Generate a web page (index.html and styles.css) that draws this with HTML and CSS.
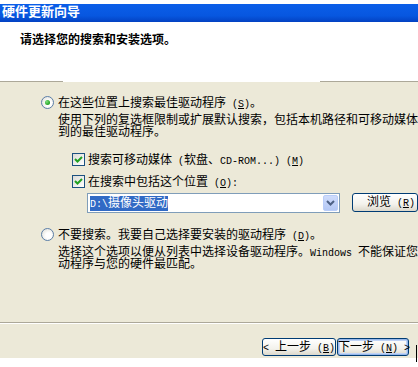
FILE: index.html
```html
<!DOCTYPE html>
<html lang="zh-CN">
<head>
    <meta charset="UTF-8">
    <meta name="viewport" content="width=device-width, initial-scale=1.0">
    <title>硬件更新向导</title>
    <link rel="stylesheet" href="styles.css">
</head>
<body>
    <div class="titlebar">硬件更新向导</div>

    <div class="header">请选择您的搜索和安装选项。</div>
    <div class="sep-top"></div>

    <div class="content">
        <div class="option">
            <span class="radio checked"></span>
            <span>在这些位置上搜索最佳驱动程序<span class="en"> (<u>S</u>)</span>。</span>
        </div>
        <div class="desc">
            <div>使用下列的复选框限制或扩展默认搜索，包括本机路径和可移动媒体</div>
            <div>到的最佳驱动程序。</div>
        </div>

        <div class="check first">
            <span class="box"><svg width="11" height="11" viewBox="0 0 11 11"><path d="M2 5 L4.5 7.5 L9 3" fill="none" stroke="#21a121" stroke-width="2"/></svg></span>
            <span>搜索可移动媒体<span class="en"> (</span>软盘、<span class="en">CD-ROM...) (<u>M</u>)</span></span>
        </div>
        <div class="check">
            <span class="box"><svg width="11" height="11" viewBox="0 0 11 11"><path d="M2 5 L4.5 7.5 L9 3" fill="none" stroke="#21a121" stroke-width="2"/></svg></span>
            <span>在搜索中包括这个位置<span class="en"> (<u>O</u>):</span></span>
        </div>

        <div class="path-row">
            <div class="combo">
                <span class="selected"><span class="en">D:\</span>摄像头驱动</span>
                <span class="drop"><svg width="9" height="6" viewBox="0 0 9 6"><path d="M1 1 L4.5 4.5 L8 1" fill="none" stroke="#4d6185" stroke-width="2"/></svg></span>
            </div>
            <button class="btn browse">浏览<span class="en"> (<u>R</u>)</span></button>
        </div>

        <div class="option second">
            <span class="radio"></span>
            <span>不要搜索。我要自己选择要安装的驱动程序<span class="en"> (<u>D</u>)</span>。</span>
        </div>
        <div class="desc">
            <div>选择这个选项以便从列表中选择设备驱动程序。<span class="en">Windows </span>不能保证您</div>
            <div>动程序与您的硬件最匹配。</div>
        </div>
    </div>

    <div class="sep-bottom"></div>

    <div class="footer">
        <button class="btn"><span class="en">&lt; </span>上一步<span class="en"> (<u>B</u>)</span></button>
        <button class="btn default">下一步<span class="en"> (<u>N</u>) &gt;</span></button>
    </div>

    <div class="cursor"></div>
</body>
</html>
```

FILE: styles.css
```css
html, body {
    margin: 0;
    overflow: hidden;
}
body {
    position: relative;
    width: 418px;
    height: 367px;
    background-color: #fff;
    font-family: "Noto Sans CJK SC", sans-serif;
    font-size: 12px;
    color: #000;
}
.en {
    font-family: "Liberation Mono", monospace;
    font-size: 10px;
}
.titlebar {
    margin-top: 4px;
    height: 18px;
    padding-left: 2px;
    background: linear-gradient(#0b5ee8, #0757e0 65%, #0341c2);
    color: #fff;
    font-weight: bold;
    font-size: 13px;
    line-height: 14px;
    overflow: hidden;
}
.header {
    box-sizing: border-box;
    height: 59px;
    padding: 11px 0 0 20px;
    font-weight: bold;
    line-height: 12px;
    background-color: #fff;
}
.sep-top {
    height: 1px;
    background: linear-gradient(to right, #aca899 0 63px, #fff 63px 320px, #aca899 320px);
}
.content {
    box-sizing: border-box;
    height: 240px;
    padding-top: 14px;
    background-color: #ece9d8;
    white-space: nowrap;
}
.option {
    display: flex;
    align-items: center;
    gap: 4px;
    height: 13px;
    padding-left: 41px;
    line-height: 13px;
}
.option.second {
    margin-top: 15px;
}
.radio {
    box-sizing: border-box;
    width: 13px;
    height: 13px;
    border: 1px solid #5a7ea8;
    border-radius: 50%;
    background: radial-gradient(circle at 60% 60%, #fff 30%, #dcdad0 100%);
    display: flex;
    align-items: center;
    justify-content: center;
}
.radio.checked::after {
    content: "";
    width: 5px;
    height: 5px;
    border-radius: 50%;
    background: radial-gradient(circle at 35% 35%, #7ee07e, #21a121 70%);
}
.desc {
    margin-top: 4px;
    padding-left: 58px;
    line-height: 12px;
}
.desc div {
    height: 12px;
    overflow: visible;
}
.check {
    display: flex;
    align-items: center;
    gap: 3px;
    height: 13px;
    margin-top: 9px;
    padding-left: 72px;
    line-height: 13px;
}
.check.first {
    margin-top: 16px;
}
.box {
    box-sizing: border-box;
    width: 13px;
    height: 13px;
    border: 1px solid #1c5180;
    background: linear-gradient(135deg, #dcdcd7, #fff);
    display: flex;
    align-items: center;
    justify-content: center;
}
.path-row {
    display: flex;
    align-items: flex-start;
    gap: 12px;
    margin-top: 5px;
    padding-left: 87px;
}
.combo {
    box-sizing: border-box;
    width: 272px;
    height: 20px;
    border: 1px solid #7f9db9;
    background-color: #fff;
    display: flex;
    align-items: center;
    justify-content: space-between;
    padding: 0 1px 0 2px;
}
.selected {
    background-color: #316ac5;
    color: #fff;
    line-height: 12px;
}
.drop {
    box-sizing: border-box;
    width: 15px;
    height: 16px;
    border: 1px solid #b9cdf9;
    border-radius: 2px;
    background: linear-gradient(#cfdcfc, #b4c8f5);
    display: flex;
    align-items: center;
    justify-content: center;
}
.btn {
    box-sizing: border-box;
    height: 18px;
    padding: 0;
    border: 1px solid #003c74;
    border-radius: 3px;
    background: linear-gradient(#fff, #f3f2ec 60%, #dcd8cb);
    font-family: "Noto Sans CJK SC", sans-serif;
    font-size: 12px;
    line-height: 14px;
    color: #000;
    white-space: nowrap;
}
.browse {
    width: 70px;
    height: 19px;
    text-align: left;
    padding-left: 14px;
}
.default {
    box-shadow: inset 0 0 0 1px #98b8ea, inset 0 0 0 2px #c0d3f5;
}
.sep-bottom {
    height: 1px;
    border-bottom: 1px solid #fff;
    background-color: #aca899;
}
.footer {
    box-sizing: border-box;
    height: 34px;
    display: flex;
    justify-content: flex-end;
    gap: 1px;
    padding: 14px 9px 0 0;
    background-color: #ece9d8;
}
.footer .btn {
    width: 74px;
}
.footer .btn.default {
    width: 72px;
}
.cursor {
    position: absolute;
    left: 416px;
    top: 345px;
    width: 1px;
    height: 17px;
    background-color: #000;
}
```
